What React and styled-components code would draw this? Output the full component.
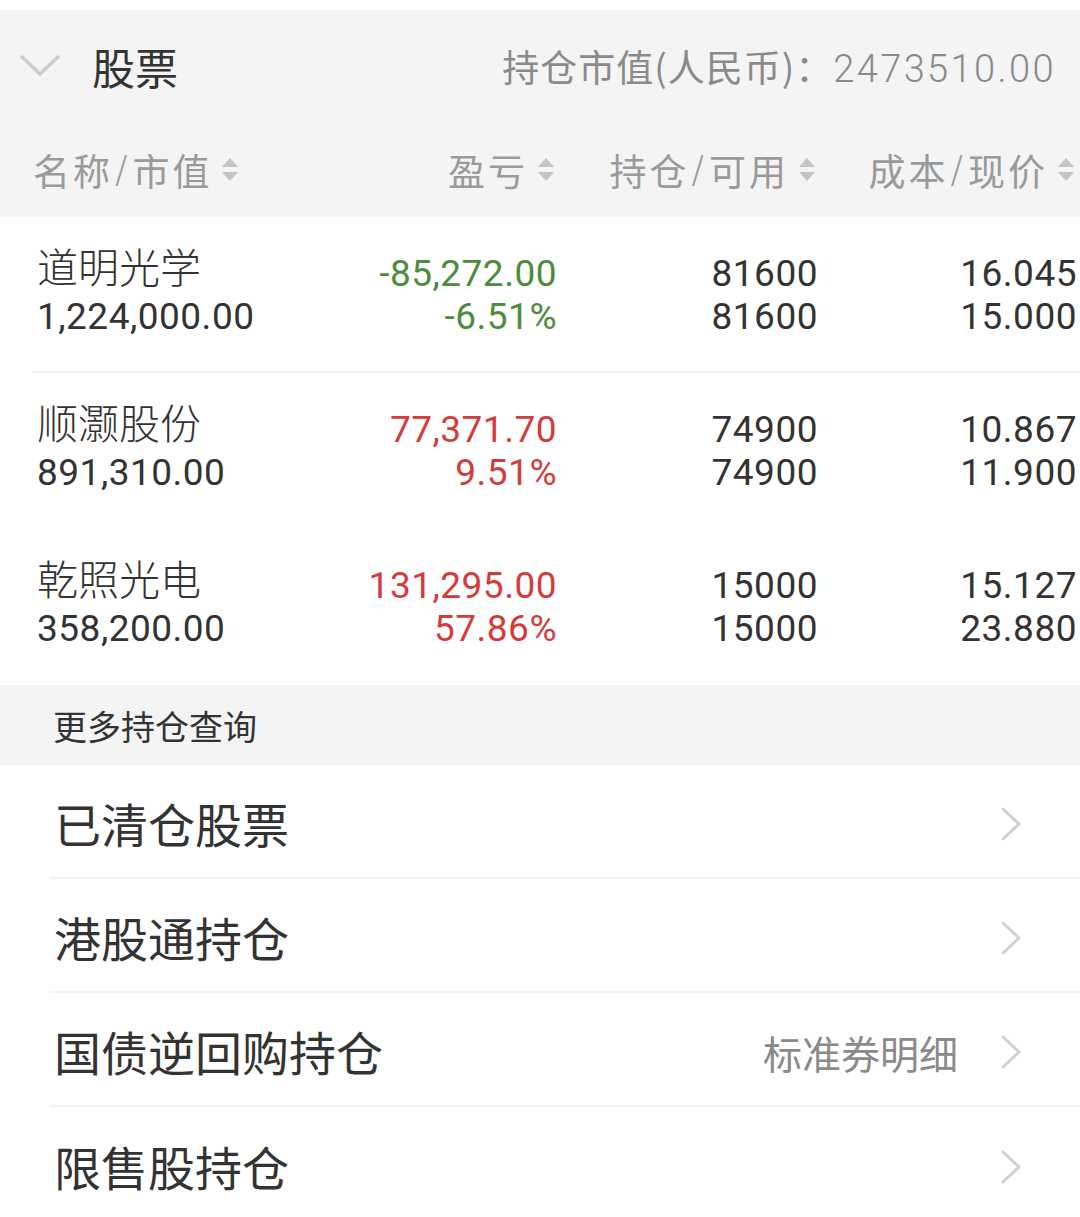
import styled, { createGlobalStyle } from 'styled-components';

const GlobalStyle = createGlobalStyle`
  html, body {
    margin: 0;
    padding: 0;
    background: #ffffff;
  }
  body {
    font-family: Roboto, "Noto Sans CJK SC", sans-serif;
    color: #333333;
  }
`;

const CJK = `"Noto Sans CJK SC", "Noto Sans", sans-serif`;
const NUM = `Roboto, "Noto Sans CJK SC", sans-serif`;

// holdings data
const stocks = [
  { name: '道明光学', value: '1,224,000.00', pl: '-85,272.00', pct: '-6.51%', hold: '81600', avail: '81600', cost: '16.045', price: '15.000', up: false, line: true },
  { name: '顺灏股份', value: '891,310.00', pl: '77,371.70', pct: '9.51%', hold: '74900', avail: '74900', cost: '10.867', price: '11.900', up: true, line: false },
  { name: '乾照光电', value: '358,200.00', pl: '131,295.00', pct: '57.86%', hold: '15000', avail: '15000', cost: '15.127', price: '23.880', up: true, line: false },
];

const menu = [
  { label: '已清仓股票' },
  { label: '港股通持仓' },
  { label: '国债逆回购持仓', extra: '标准券明细' },
  { label: '限售股持仓' },
];

//styled-components
const Page = styled.div`
  width: 1080px;
  padding-top: 10px;
  overflow: hidden;
`;

const GrayBlock = styled.div`
  background: #f4f4f4;
`;

const TitleBar = styled.div`
  height: 112px;
  display: flex;
  align-items: center;
  padding: 0 24px 4px 20px;
`;

const Collapse = styled.svg`
  width: 40px;
  height: 24px;
  flex-shrink: 0;
`;

const Title = styled.div`
  font-family: ${CJK};
  font-size: 43px;
  color: #333;
  margin-left: 32px;
  flex: 1;
`;

const Total = styled.div`
  font-family: ${CJK};
  font-size: 37px;
  color: #8a8a8a;
  letter-spacing: 1px;

  span {
    font-family: Roboto, sans-serif;
    font-weight: 300;
    font-size: 38px;
    letter-spacing: 2.4px;
  }
`;

const Grid = styled.div`
  display: grid;
  grid-template-columns: 300px 220px 261px 259px;
  padding: 0 3px 0 37px;
`;

const HeadRow = styled(Grid)`
  height: 91px;
  align-items: center;
  padding-left: 33px;
  grid-template-columns: 304px 220px 261px 259px;
`;

const HeadCell = styled.div`
  display: flex;
  align-items: center;
  justify-content: ${(p) => (p.$left ? 'flex-start' : 'flex-end')};
  padding-right: ${(p) => (p.$left ? 0 : '2px')};
  padding-bottom: 4px;
  font-family: ${CJK};
  font-size: 37px;
  letter-spacing: 3px;
  color: #9a9a9a;

  i {
    font-style: normal;
    font-family: "DejaVu Sans", sans-serif;
    font-weight: 300;
    margin: 0 2px;
  }
`;

const SortIcon = styled.svg`
  width: 18px;
  height: 26px;
  margin-left: 9px;
  flex-shrink: 0;
`;

const StockRow = styled.div`
  position: relative;
  background: #fff;
  padding: 22px 0 30px;

  &::after {
    content: '';
    display: ${(p) => (p.$line ? 'block' : 'none')};
    position: absolute;
    left: 32px;
    right: 0;
    bottom: 0;
    height: 2px;
    background: #f0f0f0;
  }
`;

const Cell = styled.div`
  display: flex;
  flex-direction: column;
  justify-content: flex-end;
  align-items: ${(p) => (p.$left ? 'flex-start' : 'flex-end')};
  white-space: nowrap;
`;

const Name = styled.div`
  height: 52px;
  line-height: 52px;
  font-family: ${CJK};
  font-size: 41px;
  font-weight: 300;
  color: #333;
`;

const Num = styled.div`
  height: ${(p) => (p.$tight ? '34px' : '52px')};
  line-height: ${(p) => (p.$tight ? '34px' : '52px')};
  font-family: ${NUM};
  font-size: 37px;
  letter-spacing: 0.5px;
  color: ${(p) => (p.$tone === 'up' ? '#d43c3c' : p.$tone === 'down' ? '#4c8c3c' : '#333')};
`;

const SectionLabel = styled.div`
  background: #f4f4f4;
  height: 80px;
  display: flex;
  align-items: center;
  padding-left: 53px;
  font-family: ${CJK};
  font-size: 34px;
  color: #333;
`;

const MenuList = styled.div`
  background: #fff;
`;

const MenuItem = styled.div`
  height: 114px;
  margin-left: 50px;
  padding: 0 58px 0 4px;
  display: flex;
  align-items: center;
  border-bottom: ${(p) => (p.$last ? 'none' : '2px solid #f2f2f2')};
  box-sizing: border-box;
`;

const MenuLabel = styled.div`
  flex: 1;
  font-family: ${CJK};
  font-size: 47px;
  color: #333;
  padding-top: 2px;
`;

const MenuExtra = styled.div`
  font-family: ${CJK};
  font-size: 39px;
  color: #8a8a8a;
  margin-right: 42px;
  padding-top: 6px;
`;

const Arrow = styled.svg`
  width: 22px;
  height: 36px;
  flex-shrink: 0;
  margin-top: 6px;
`;

const Sort = () => (
  <SortIcon viewBox="0 0 18 26">
    <polygon points="9,1 17,10 1,10" fill="#c4c4c4" />
    <polygon points="1,15 17,15 9,24" fill="#c4c4c4" />
  </SortIcon>
);

const App = () => {
  return (
    <Page>
      <GlobalStyle />
      <GrayBlock>
        <TitleBar>
          <Collapse viewBox="0 0 40 24">
            <polyline points="2,3 20,20 38,3" fill="none" stroke="#cdcdcd" strokeWidth="3.5" strokeLinecap="round" strokeLinejoin="round" />
          </Collapse>
          <Title>股票</Title>
          <Total>持仓市值(人民币)：<span>2473510.00</span></Total>
        </TitleBar>
        <HeadRow>
          <HeadCell $left>名称<i>/</i>市值<Sort /></HeadCell>
          <HeadCell>盈亏<Sort /></HeadCell>
          <HeadCell>持仓<i>/</i>可用<Sort /></HeadCell>
          <HeadCell>成本<i>/</i>现价<Sort /></HeadCell>
        </HeadRow>
      </GrayBlock>

      {stocks.map((s) => (
        <StockRow key={s.name} $line={s.line}>
          <Grid>
            <Cell $left>
              <Name>{s.name}</Name>
              <Num>{s.value}</Num>
            </Cell>
            <Cell>
              <Num $tight $tone={s.up ? 'up' : 'down'}>{s.pl}</Num>
              <Num $tone={s.up ? 'up' : 'down'}>{s.pct}</Num>
            </Cell>
            <Cell>
              <Num $tight>{s.hold}</Num>
              <Num>{s.avail}</Num>
            </Cell>
            <Cell>
              <Num $tight>{s.cost}</Num>
              <Num>{s.price}</Num>
            </Cell>
          </Grid>
        </StockRow>
      ))}

      <SectionLabel>更多持仓查询</SectionLabel>

      <MenuList>
        {menu.map((m, i) => (
          <MenuItem key={m.label} $last={i === menu.length - 1}>
            <MenuLabel>{m.label}</MenuLabel>
            {m.extra && <MenuExtra>{m.extra}</MenuExtra>}
            <Arrow viewBox="0 0 22 36">
              <polyline points="3,3 19,18 3,33" fill="none" stroke="#d0d0d0" strokeWidth="3" strokeLinecap="round" strokeLinejoin="round" />
            </Arrow>
          </MenuItem>
        ))}
      </MenuList>
    </Page>
  );
};

export default App;
